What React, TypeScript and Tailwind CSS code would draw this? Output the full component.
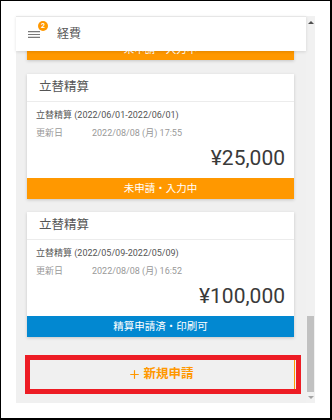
import { Plus } from 'lucide-react';

const ITEMS = [
  {
    title: '立替精算',
    period: '(2022/06/01-2022/06/01)',
    updated: '2022/08/08 (月) 17:55',
    amount: '¥25,000',
    status: '未申請・入力中',
    color: 'bg-[#ff9800]',
  },
  {
    title: '立替精算',
    period: '(2022/05/09-2022/05/09)',
    updated: '2022/08/08 (月) 16:52',
    amount: '¥100,000',
    status: '精算申請済・印刷可',
    color: 'bg-[#0288d1]',
  },
];

function ExpenseCard({ item, className = '' }: { item: (typeof ITEMS)[number]; className?: string }) {
  return (
    <div className={`bg-white shadow-[0_1px_3px_rgba(0,0,0,0.18)] ${className}`}>
      <div className="h-[28px] flex items-center pl-[12px] border-b border-[#ececec] text-[12.5px] text-[#555]">
        {item.title}
      </div>
      <div className="pt-[7px] pb-[8px] px-[9px]">
        <div className="h-[13px] leading-[13px] text-[9px] text-[#555] whitespace-nowrap">
          {item.title} {item.period}
        </div>
        <div className="mt-[5px] h-[13px] leading-[13px] text-[9px] text-[#999] flex whitespace-nowrap">
          <span className="w-[56px]">更新日</span>
          <span>{item.updated}</span>
        </div>
        <div className="mt-[6px] leading-[24px] text-[21px] text-[#3a3a3a] text-right">{item.amount}</div>
      </div>
      <div className={`h-[21px] flex items-center justify-center text-white text-[10.5px] ${item.color}`}>
        {item.status}
      </div>
    </div>
  );
}

export default function App() {
  return (
    <div className="w-[332px] h-[420px] bg-white border-l border-t border-r-2 border-b-2 border-black pl-[15px] pt-[15px] font-['Roboto','Noto_Sans_CJK_JP',sans-serif]">
      <div className="flex w-[299px] h-[387px]">
        <div className="w-[290px] flex flex-col">
          {/* header */}
          <div className="relative z-10 h-[35px] bg-white border-t border-[#e6e6e6] shadow-[0_1px_3px_rgba(0,0,0,0.12)] flex items-center pl-[12px]">
            <div className="relative w-[12px] h-[7px]">
              <svg width="12" height="7" viewBox="0 0 12 7">
                <path d="M0 0.6H12M0 3.5H12M0 6.4H12" stroke="#7a7a7a" strokeWidth="1.2" />
              </svg>
              <span className="absolute left-[10px] top-[-10px] w-[10px] h-[10px] rounded-full bg-[#ff9800] text-white text-[7px] font-bold leading-[10px] text-center">
                2
              </span>
            </div>
            <span className="ml-[17px] text-[12px] text-[#555]">経費</span>
          </div>

          {/* list */}
          <div className="flex-1 bg-[#f0f0f0] overflow-hidden pl-[11px] pr-[12px]">
            <div className="-mt-[12px] shadow-[0_1px_3px_rgba(0,0,0,0.18)] h-[21px] bg-[#ff9800] flex items-center justify-center text-white text-[10.5px]">
              未申請・入力中
            </div>
            <ExpenseCard item={ITEMS[0]} className="mt-[14px]" />
            <ExpenseCard item={ITEMS[1]} className="mt-[13px]" />

            <div className="relative mt-[20px] w-[268px]">
              <button className="w-full h-[35px] border border-[#ff9800] flex items-center justify-center gap-[2px] text-[#ff9800] text-[12.5px] font-bold">
                <Plus size={13} strokeWidth={2.2} />
                新規申請
              </button>
              <div className="absolute left-[-2px] right-[-6px] top-[-2px] bottom-[-2px] border-[5px] border-[#ed1c24]" />
            </div>
          </div>
        </div>

        {/* scrollbar */}
        <div className="w-[9px] bg-[#f1f1f1] flex flex-col items-center">
          <div className="h-[12px] flex items-center justify-center">
            <div className="w-0 h-0 border-l-[3px] border-r-[3px] border-b-[3px] border-l-transparent border-r-transparent border-b-[#505050]" />
          </div>
          <div className="flex-1" />
          <div className="w-[7px] h-[76px] bg-[#c1c1c1]" />
          <div className="h-[11px] flex items-center justify-center">
            <div className="w-0 h-0 border-l-[3px] border-r-[3px] border-t-[3px] border-l-transparent border-r-transparent border-t-[#a3a3a3]" />
          </div>
        </div>
      </div>
    </div>
  );
}
